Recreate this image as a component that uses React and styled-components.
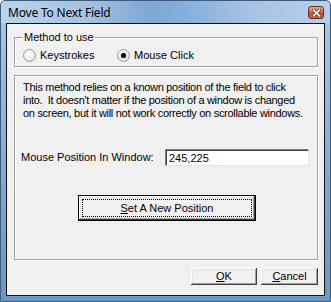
import React from "react";
import styled, { createGlobalStyle } from "styled-components";

const Global = createGlobalStyle`
  html, body { margin: 0; padding: 0; background: #fff; }
  body { font-family: "Liberation Sans", Arial, sans-serif; }
`;

const Window = styled.div`
  width: 331px;
  height: 302px;
  box-sizing: border-box;
  border: 1px solid #3d5c7d;
  border-radius: 5px 5px 0 0;
  background: linear-gradient(to right, #bcd3ec 0%, #a6c2e2 25%, #7fa8d2 45%, #86addb 55%, #a9c5e4 78%, #b6cfea 100%);
  display: flex;
  flex-direction: column;
  overflow: hidden;
`;

const TitleBar = styled.div`
  height: 22px;
  flex: none;
  display: flex;
  align-items: center;
  padding: 0 6px 0 7px;
  box-sizing: border-box;
`;

const Title = styled.div`
  flex: 1;
  font-family: "Noto Sans", "Open Sans", sans-serif;
  font-size: 12px;
  color: #000;
  letter-spacing: -0.2px;
  padding-top: 1px;
`;

const CloseBtn = styled.div`
  width: 16px;
  height: 13px;
  box-sizing: border-box;
  border: 1px solid #6f2a1f;
  border-radius: 3px;
  background: linear-gradient(to bottom, #e8a48f 0%, #d5745a 45%, #c24a2e 55%, #d66a47 100%);
  display: flex;
  align-items: center;
  justify-content: center;
  margin-top: 1px;
`;

const Frame = styled.div`
  flex: 1;
  display: flex;
  min-height: 0;
  padding: 0 5px 5px;
  background: linear-gradient(to bottom, #a9c5e4 0%, #7fa6cf 60%, #6b97c4 100%);
`;

const Client = styled.div`
  flex: 1;
  min-width: 0;
  background: #f0f0f0;
  border: 1px solid #111;
  display: flex;
  flex-direction: column;
  padding: 7px 6px 0 7px;
  font-size: 11px;
  line-height: 13px;
  color: #000;
`;

const Group = styled.fieldset`
  margin: ${(p) => p.$mt || 0}px 0 0 0;
  padding: ${(p) => p.$pad};
  border: 1px solid #a0a0a0;
  box-shadow: 1px 1px 0 #fff, inset 1px 1px 0 #fff;
  min-width: 0;
  display: flex;
  flex-direction: column;
  align-items: flex-start;
`;

const Legend = styled.legend`
  padding: 0 1px;
  font-size: 11px;
  line-height: 13px;
`;

const Options = styled.div`
  display: flex;
  align-items: center;
`;

const Option = styled.label`
  display: flex;
  align-items: center;
  gap: 4px;
  width: ${(p) => p.$w}px;
`;

const Radio = styled.span`
  width: 13px;
  height: 13px;
  box-sizing: border-box;
  border-radius: 50%;
  border: 1px solid #9a9a9a;
  background: radial-gradient(circle at 35% 35%, #ffffff 0%, #ececec 55%, #d8d8d8 100%);
  display: flex;
  align-items: center;
  justify-content: center;
  &::after {
    content: "";
    width: 5px;
    height: 5px;
    border-radius: 50%;
    background: ${(p) => (p.$on ? "#111" : "transparent")};
    box-shadow: ${(p) => (p.$on ? "0 0 1px #555" : "none")};
  }
`;

const Description = styled.p`
  margin: 0;
  padding-left: 2px;
  white-space: pre;
  letter-spacing: -0.3px;
`;

const FieldRow = styled.div`
  display: flex;
  align-items: center;
  margin-top: 29px;
`;

const FieldLabel = styled.span`
  width: 144px;
`;

const TextBox = styled.div`
  width: 144px;
  height: 17px;
  box-sizing: border-box;
  background: #fff;
  border-top: 1px solid #808080;
  border-left: 1px solid #808080;
  border-right: 1px solid #e3e3e3;
  border-bottom: 1px solid #e3e3e3;
  box-shadow: inset 1px 1px 0 #404040;
  padding: 2px 0 0 3px;
`;

const Button = styled.button`
  font-family: "Liberation Sans", Arial, sans-serif;
  font-size: 11px;
  line-height: 13px;
  color: #000;
  background: #f0f0f0;
  box-sizing: border-box;
  width: ${(p) => p.$w}px;
  height: ${(p) => p.$h}px;
  margin: 0;
  padding: 0;
  border: ${(p) => (p.$default ? "1px solid #000" : "none")};
  box-shadow: inset -1px -1px 0 #404040, inset 1px 1px 0 #ffffff, inset -2px -2px 0 #a0a0a0, inset 2px 2px 0 #e3e3e3;
  position: relative;
  display: flex;
  align-items: center;
  justify-content: center;
`;

const FocusRing = styled.span`
  position: absolute;
  inset: 3px;
  border: 1px dotted #000;
`;

const SetButton = styled(Button)`
  margin: 29px 0 0 57px;
`;

const ButtonRow = styled.div`
  display: flex;
  justify-content: flex-end;
  gap: 4px;
  margin-top: 8px;
`;

const U = styled.u`
  text-underline-offset: 1px;
`;

export default function App() {
  return (
    <>
      <Global />
      <Window>
        <TitleBar>
          <Title>Move To Next Field</Title>
          <CloseBtn>
            <svg width="9" height="8" viewBox="0 0 9 8">
              <path d="M1.5 1.2 L7.5 6.8 M7.5 1.2 L1.5 6.8" stroke="#5a2a22" strokeWidth="3" strokeLinecap="square" />
              <path d="M1.5 1.2 L7.5 6.8 M7.5 1.2 L1.5 6.8" stroke="#fff" strokeWidth="1.6" strokeLinecap="square" />
            </svg>
          </CloseBtn>
        </TitleBar>
        <Frame>
          <Client>
            <Group $pad="5px 8px 4px 8px">
              <Legend>Method to use</Legend>
              <Options>
                <Option $w={94}>
                  <Radio />
                  Keystrokes
                </Option>
                <Option $w={120}>
                  <Radio $on />
                  Mouse Click
                </Option>
              </Options>
            </Group>
            <Group $mt={8} $pad="5px 8px 38px 6px">
              <Description>
                {"This method relies on a known position of the field to click\ninto.  It doesn't matter if the position of a window is changed\non screen, but it will not work correctly on scrollable windows."}
              </Description>
              <FieldRow>
                <FieldLabel>Mouse Position In Window:</FieldLabel>
                <TextBox>245,225</TextBox>
              </FieldRow>
              <SetButton $w={178} $h={26} $default>
                <FocusRing />
                <span>
                  <U>S</U>et A New Position
                </span>
              </SetButton>
            </Group>
            <ButtonRow>
              <Button $w={66} $h={17}>
                <span>
                  <U>O</U>K
                </span>
              </Button>
              <Button $w={57} $h={17}>
                <span>
                  <U>C</U>ancel
                </span>
              </Button>
            </ButtonRow>
          </Client>
        </Frame>
      </Window>
    </>
  );
}
